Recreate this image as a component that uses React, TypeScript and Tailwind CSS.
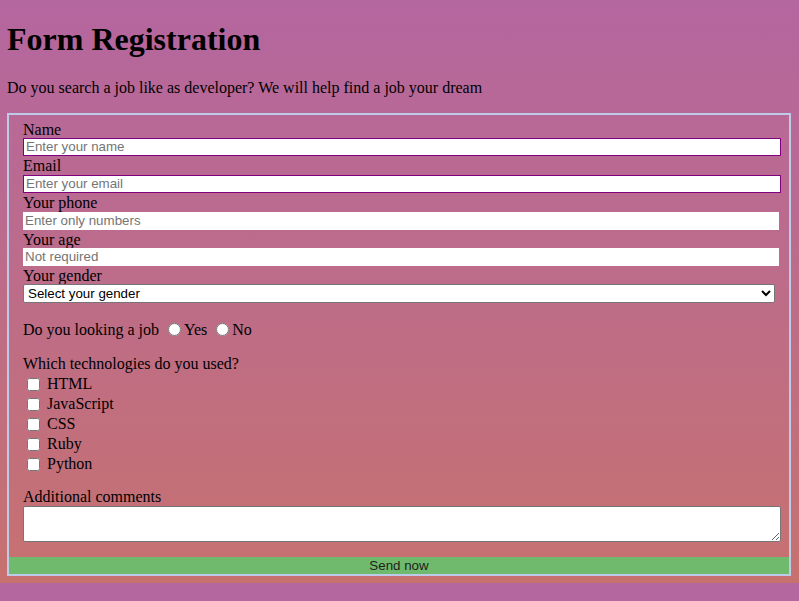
import React from "react";

const serif = { fontFamily: '"Liberation Serif", "Times New Roman", serif' };
const sans = { fontFamily: '"Liberation Sans", Arial, sans-serif' };

export default function App() {
  const techs = ["HTML", "JavaScript", "CSS", "Ruby", "Python"];
  return (
    <div className="min-h-[601px] bg-[#b4669f] text-black" style={serif}>
      <div className="bg-gradient-to-b from-[#b4669f] to-[#c7716f] px-[8px] pt-[21px] pb-[7px]">
        <h1 className="-ml-px h-[37px] text-[32px] font-bold leading-[37px]">Form Registration</h1>
        <p className="-ml-px mt-[21px] h-[18px] text-[16px] leading-[18px]">
          Do you search a job like as developer? We will help find a job your dream
        </p>
        <form className="-ml-px mt-[16px] border-2 border-[#bccbe8] pt-[6px]">
          <div className="flex flex-col pl-[14px] pr-[8px] text-[16px]">
            <label className="h-[17px] leading-[17px]">Name</label>
            <input
              className="h-[18px] w-full border border-[#800080] bg-white pl-[2px] text-[13.33px] outline-none placeholder:text-[#757575]"
              style={sans}
              placeholder="Enter your name"
            />
            <label className="h-[19px] pt-[1px] leading-[18px]">Email</label>
            <input
              className="h-[18px] w-full border border-[#800080] bg-white pl-[2px] text-[13.33px] outline-none placeholder:text-[#757575]"
              style={sans}
              placeholder="Enter your email"
            />
            <label className="h-[19px] pt-[1px] leading-[18px]">Your phone</label>
            <input
              className="h-[18px] w-[756px] border border-white bg-white pl-[1px] text-[13.33px] outline-none placeholder:text-[#757575]"
              style={sans}
              placeholder="Enter only numbers"
            />
            <label className="h-[18px] pt-[1px] leading-[18px]">Your age</label>
            <input
              className="h-[18px] w-[756px] border border-white bg-white pl-[1px] text-[13.33px] outline-none placeholder:text-[#757575]"
              style={sans}
              placeholder="Not required"
            />
            <label className="h-[18px] pt-[1px] leading-[18px]">Your gender</label>
            <select
              className="h-[19px] w-[752px] rounded-[2px] border border-[#767676] bg-white pl-0 text-[13.33px] leading-[15px] text-black"
              style={sans}
              defaultValue=""
            >
              <option value="">Select your gender</option>
              <option value="m">Male</option>
              <option value="f">Female</option>
            </select>

            <div className="mt-[18px] h-[18px] leading-[18px]">
              Do you looking a job{" "}
              <input type="radio" name="job" className="ml-[5px] mr-[3px] h-[13px] w-[13px] align-[-1px]" />
              Yes{" "}
              <input type="radio" name="job" className="ml-[5px] mr-[3px] h-[13px] w-[13px] align-[-1px]" />
              No
            </div>

            <div className="mt-[16px] h-[18px] leading-[18px]">Which technologies do you used?</div>
            <div className="mt-[1px] flex flex-col">
              {techs.map((t) => (
                <label key={t} className="flex h-[20px] items-center">
                  <input type="checkbox" className="ml-[4px] h-[13px] w-[13px]" />
                  <span className="ml-[7px] leading-[18px]">{t}</span>
                </label>
              ))}
            </div>

            <label className="mt-[14px] h-[18px] leading-[18px]">Additional comments</label>
            <textarea className="h-[36px] w-full rounded-[2px] border border-[#767676] bg-white outline-none" />
          </div>
          <button
            type="button"
            className="mt-[15px] block h-[17px] w-full bg-[#6fba6c] text-center text-[13.33px] leading-[17px] text-[#1e1e1e]"
            style={sans}
          >
            Send now
          </button>
        </form>
      </div>
    </div>
  );
}
